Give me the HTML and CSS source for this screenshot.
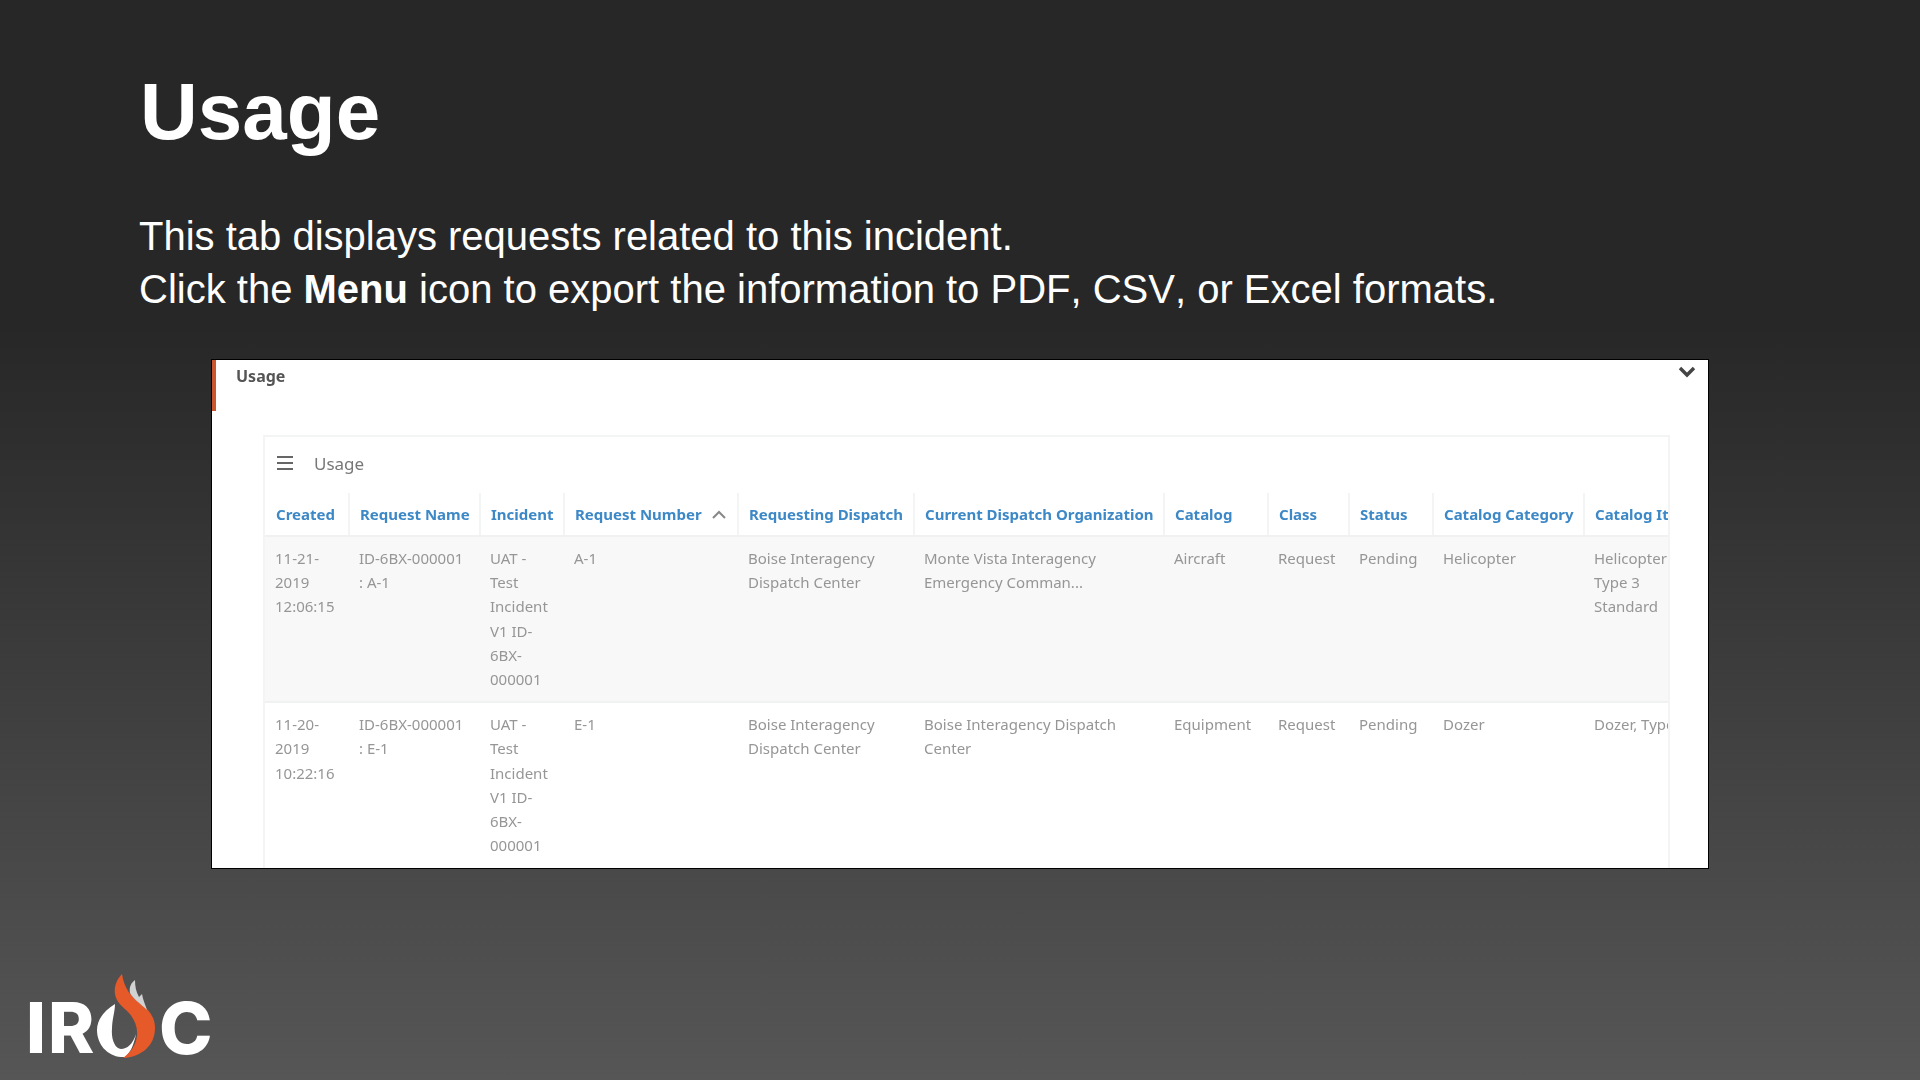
FILE: index.html
```html
<!DOCTYPE html>
<html lang="en">
<head>
<meta charset="utf-8">
<title>Usage</title>
<link rel="stylesheet" href="styles.css">
</head>
<body>
<main class="slide">
  <h1 class="title">Usage</h1>
  <p class="lead">This tab displays requests related to this incident.<br>Click the <b>Menu</b> icon to export the information to PDF, CSV, or Excel formats.</p>
  <section class="shot">
    <div class="soft">
      <header class="tabbar">
        <span class="tab-name">Usage</span>
        <svg class="chev" viewBox="0 0 18 12" aria-hidden="true"><path d="M2 2l7 7 7-7" fill="none" stroke="#444" stroke-width="3.4"/></svg>
      </header>
      <div class="card">
        <div class="toolbar">
          <svg class="menu" viewBox="0 0 16 16" aria-hidden="true"><path d="M0 2h16M0 8h16M0 14h16" stroke="#666" stroke-width="2"/></svg>
          <span class="card-name">Usage</span>
        </div>
        <table class="grid">
          <colgroup>
            <col class="c1"><col class="c2"><col class="c3"><col class="c4"><col class="c5"><col class="c6"><col class="c7"><col class="c8"><col class="c9"><col class="c10"><col class="c11">
          </colgroup>
          <thead>
            <tr>
              <th>Created</th><th>Request Name</th><th>Incident</th>
              <th>Request Number <svg class="sort" viewBox="0 0 16 10" aria-hidden="true"><path d="M2 8l6-6 6 6" fill="none" stroke="#888" stroke-width="2"/></svg></th>
              <th>Requesting Dispatch</th><th>Current Dispatch Organization</th><th>Catalog</th><th>Class</th><th>Status</th><th>Catalog Category</th><th>Catalog Item</th>
            </tr>
          </thead>
          <tbody>
            <tr class="odd">
              <td>11-21-2019 12:06:15</td><td>ID-6BX-000001 : A-1</td><td>UAT - Test Incident V1 ID-6BX-000001</td><td>A-1</td>
              <td>Boise Interagency Dispatch Center</td><td>Monte Vista Interagency Emergency Comman...</td><td>Aircraft</td><td>Request</td><td>Pending</td><td>Helicopter</td><td>Helicopter Type 3 Standard</td>
            </tr>
            <tr>
              <td>11-20-2019 10:22:16</td><td>ID-6BX-000001 : E-1</td><td>UAT - Test Incident V1 ID-6BX-000001</td><td>E-1</td>
              <td>Boise Interagency Dispatch Center</td><td>Boise Interagency Dispatch Center</td><td>Equipment</td><td>Request</td><td>Pending</td><td>Dozer</td><td class="single">Dozer, Type 1 Standard</td>
            </tr>
          </tbody>
        </table>
      </div>
    </div>
  </section>
  <footer class="logo">
    <span class="logo-text logo-left">IR</span>
    <svg class="flame" viewBox="0 0 66 84" aria-hidden="true">
      <path fill="#fff" d="M20 30C10 36 2 45 2 56C2 70 12 82 26 83L30 83C36 78 39 70 41 60C38 70 32 75 26 75C20 75 16 65 17 55C17 45 20 38 20 30Z"/>
      <path fill="#e65a2a" d="M27 0C21 6 19 14 20 20C21 28 28 33 33 38C39 44 43 53 42 62C41 71 36 78 28 84C46 83 60 72 60 54C60 43 54 36 46 30C36 23 29 14 27 0Z"/>
      <path fill="#d2d2d2" d="M40 6C36 9 34 13 35 19C38 25 46 30 52 36C50 30 48 26 47 20L44 23C41 18 40 12 40 6Z"/>
    </svg>
    <span class="logo-text logo-right">C</span>
  </footer>
</main>
</body>
</html>
```
FILE: styles.css
```css
* { box-sizing: border-box; }
html, body { margin: 0; height: 100%; }
body { overflow: hidden; }
.slide {
  width: 1920px;
  height: 1080px;
  display: flex;
  flex-direction: column;
  background: linear-gradient(180deg, #272727 0%, #272727 30%, #565656 100%);
  color: #fff;
  font-family: "Liberation Sans", Arial, sans-serif;
  padding-top: 66px;
}
.title {
  margin: 0 0 0 140px;
  font-size: 80px;
  line-height: 92px;
  font-weight: 700;
}
.lead {
  margin: 52px 0 0 139px;
  font-size: 40px;
  line-height: 53px;
  font-kerning: none;
}
.shot {
  margin: 43px 0 0 211px;
  width: 1498px;
  height: 510px;
  background: #fff;
  border: 1px solid #000;
  overflow: hidden;
  font-family: "Noto Sans", sans-serif;
}
.soft { filter: blur(0.7px); height: 100%; }
.tabbar {
  display: flex;
  justify-content: space-between;
  align-items: flex-start;
  height: 51px;
  border-left: 4px solid #c9562c;
  padding: 4px 12px 0 20px;
}
.tab-name { font-size: 16px; font-weight: 700; line-height: 24px; color: #555; }
.chev { width: 18px; height: 12px; margin-top: 2px; }
.card {
  margin: 24px 38px 0 51px;
  border: 2px solid #f3f4f4;
  border-bottom: 0;
  height: 480px;
  overflow: hidden;
}
.toolbar {
  display: flex;
  align-items: center;
  height: 56px;
  padding: 0 0 4px 12px;
  gap: 21px;
}
.menu { width: 16px; height: 16px; }
.card-name { font-size: 17px; color: #777; }
.grid {
  table-layout: fixed;
  width: 1429px;
  border-collapse: collapse;
  font-size: 15px;
  line-height: 24.2px;
}
.c1 { width: 84px; }
.c2 { width: 131px; }
.c3 { width: 84px; }
.c4 { width: 174px; }
.c5 { width: 176px; }
.c6 { width: 250px; }
.c7 { width: 104px; }
.c8 { width: 81px; }
.c9 { width: 84px; }
.c10 { width: 151px; }
.c11 { width: 110px; }
th {
  height: 43px;
  padding: 0 9px 0 10px;
  text-align: left;
  white-space: nowrap;
  font-size: 15px;
  font-weight: 700;
  color: #3d88c6;
  border-right: 2px solid #f3f4f4;
  border-bottom: 2px solid #f0f1f1;
}
th:first-child { padding-left: 11px; }
td {
  padding: 9px 9px 10px 10px;
  vertical-align: top;
  color: #969696;
}
td.single { white-space: nowrap; }
.odd td { background: #f8f8f8; border-bottom: 2px solid #f0f1f1; }
.sort { width: 16px; height: 10px; margin-left: 5px; }
.logo {
  display: flex;
  align-items: flex-end;
  margin: auto 0 22px 26px;
  height: 84px;
}
.logo-text {
  font-family: Inter, sans-serif;
  font-weight: 800;
  font-size: 70px;
  line-height: 60px;
  color: #fff;
  flex: none;
}
.logo-left { width: 69px; letter-spacing: 2px; }
.logo-right { margin-left: -2px; font-size: 72px; }
.flame { width: 66px; height: 84px; flex: none; }
```
